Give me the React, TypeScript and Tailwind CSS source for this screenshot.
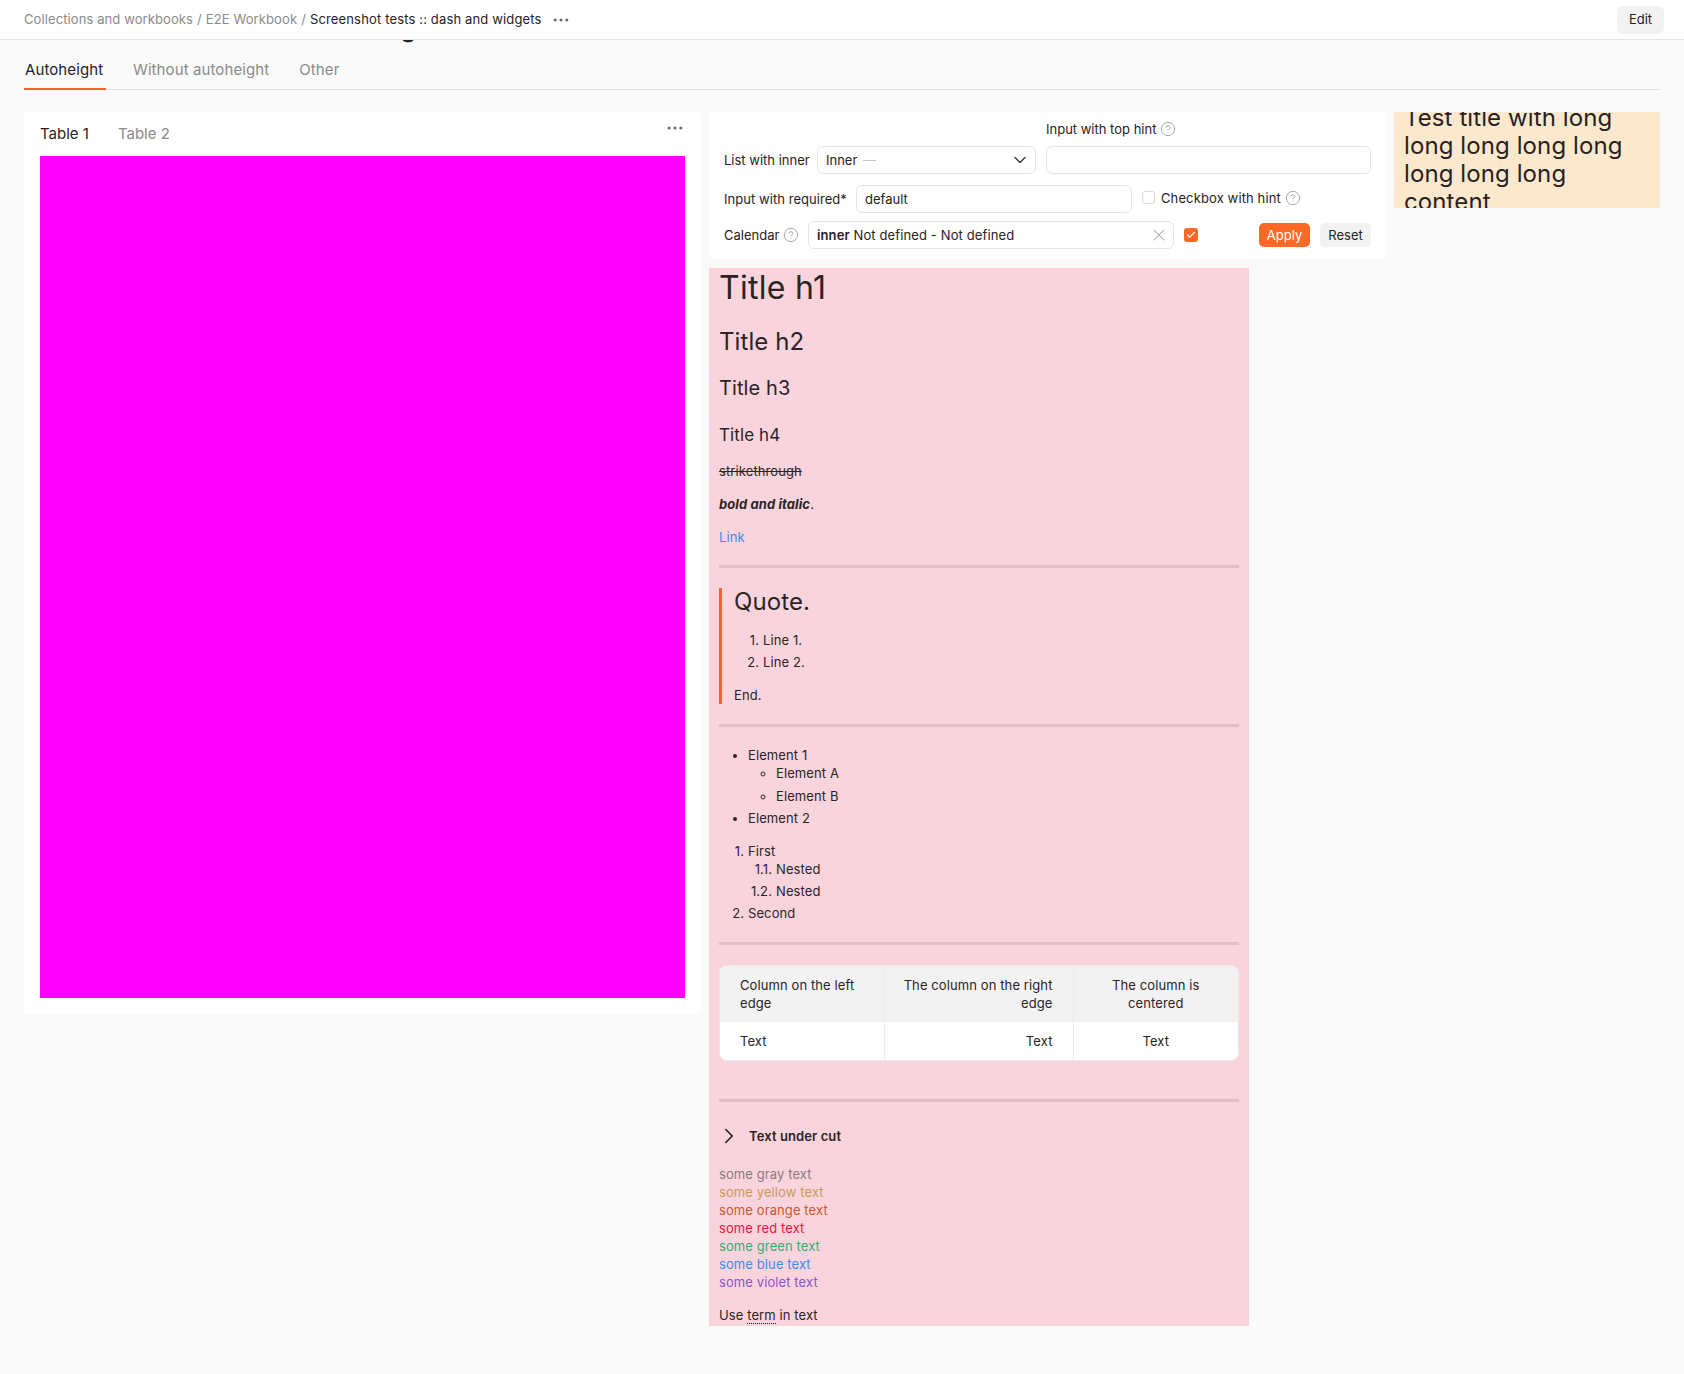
import React from 'react';
import { ChevronDown, ChevronRight, CircleHelp, Check, X, Ellipsis } from 'lucide-react';

const Hint = () => <CircleHelp className="w-[16px] h-[16px] text-[#a8a8a8] shrink-0" strokeWidth={1.5} />;

const Rule = ({ className }: { className: string }) => <div className={`h-[3px] bg-[#e4bcc5] ${className}`}></div>;

// numbered row with the marker pushed to the right of its column
const NumRow = ({ n, w, className, children }: { n: string; w: string; className?: string; children: React.ReactNode }) => (
    <div className={`flex ${className ?? ''}`}>
        <span className={`${w} text-right pr-[4px] shrink-0`}>{n}</span>
        <span>{children}</span>
    </div>
);

const colored = [
    ['some gray text', 'text-[#8b7a80]'],
    ['some yellow text', 'text-[#c79a5a]'],
    ['some orange text', 'text-[#c9592e]'],
    ['some red text', 'text-[#f0143f]'],
    ['some green text', 'text-[#35ab72]'],
    ['some blue text', 'text-[#3c8ce8]'],
    ['some violet text', 'text-[#8a55cc]'],
];

const FormPanel = () => (
    <div className="bg-white rounded-[4px] h-[147px] pl-[15px] pr-[14px] pt-[8px] text-[13px] leading-[18px]">
        <div className="flex items-end">
            <span className="w-[78px] shrink-0 h-[28px] leading-[28px] whitespace-nowrap">List with inner</span>
            <div className="ml-[15px] w-[219px] h-[28px] border border-[#e5e5e5] rounded-[6px] flex items-center justify-between pl-[8px] pr-[5px]">
                <span className="flex items-center gap-[6px]">
                    Inner <span className="w-[13px] h-[1px] bg-[#c4c4c4]"></span>
                </span>
                <ChevronDown className="w-[20px] h-[20px] text-[#333]" strokeWidth={1.5} />
            </div>
            <div className="ml-[10px] w-[325px]">
                <div className="flex items-center gap-[4px] h-[18px] mb-[8px]">
                    Input with top hint <Hint />
                </div>
                <div className="h-[28px] border border-[#e5e5e5] rounded-[6px]"></div>
            </div>
        </div>
        <div className="flex items-center mt-[11px]">
            <span className="w-[132px] shrink-0 whitespace-nowrap tracking-[0.05px]">Input with required*</span>
            <div className="w-[276px] h-[28px] border border-[#e5e5e5] rounded-[6px] flex items-center pl-[8px]">default</div>
            <span className="ml-[10px] w-[13px] h-[13px] border border-[#d9d9d9] rounded-[3px] -mt-[3px]"></span>
            <span className="ml-[6px] flex items-center gap-[4px] -mt-[3px] tracking-[0.12px]">
                Checkbox with hint <Hint />
            </span>
        </div>
        <div className="flex items-center mt-[8px]">
            <span className="w-[84px] shrink-0 flex items-center gap-[4px]">
                Calendar <Hint />
            </span>
            <div className="w-[366px] h-[28px] border border-[#e5e5e5] rounded-[6px] flex items-center justify-between pl-[8px] pr-[4px]">
                <span className="tracking-[0.12px]">
                    <b className="font-semibold">inner</b> Not defined - Not defined
                </span>
                <X className="w-[20px] h-[20px] text-[#a8a8a8]" strokeWidth={1.25} />
            </div>
            <span className="ml-[10px] w-[14px] h-[14px] rounded-[3px] bg-[#ff6928] flex items-center justify-center">
                <Check className="w-[10px] h-[10px] text-white" strokeWidth={3} />
            </span>
            <button className="ml-[61px] w-[51px] h-[24px] rounded-[5px] bg-[#ff6928] text-white text-center">Apply</button>
            <button className="ml-[10px] w-[51px] h-[24px] rounded-[5px] bg-[#f2f2f2] text-center">Reset</button>
        </div>
    </div>
);

const MarkdownPanel = () => (
    <div className="bg-[#fad4dc] w-[540px] h-[1058px] overflow-hidden mt-[9px] pl-[10px] pr-[10px] text-[13px] leading-[18px] tracking-[0.1px] text-[#2b2426]">
        <h1 className="text-[32px] leading-[40px] tracking-[0.3px]">Title h1</h1>
        <h2 className="text-[24px] leading-[32px] mt-[18px]">Title h2</h2>
        <h3 className="text-[20px] leading-[28px] mt-[16px]">Title h3</h3>
        <h4 className="text-[17px] leading-[24px] mt-[21px]">Title h4</h4>
        <p className="line-through mt-[15px]">strikethrough</p>
        <p className="mt-[15px]">
            <b className="italic font-bold">bold and italic</b>.
        </p>
        <p className="mt-[15px]">
            <a className="text-[#3c8ce8]">Link</a>
        </p>
        <Rule className="mt-[19px]" />

        <blockquote className="mt-[20px] h-[116px] border-l-[3px] border-[#f0652f] pl-[12px]">
            <p className="text-[24px] leading-[28px]">Quote.</p>
            <NumRow n="1." w="w-[29px]" className="mt-[15px]">Line 1.</NumRow>
            <NumRow n="2." w="w-[29px]" className="mt-[4px]">Line 2.</NumRow>
            <p className="mt-[15px]">End.</p>
        </blockquote>
        <Rule className="mt-[20px]" />

        <ul className="list-disc pl-[29px] mt-[19px]">
            <li>
                Element 1
                <ul className="list-[circle] pl-[28px]">
                    <li>Element A</li>
                    <li className="mt-[5px]">Element B</li>
                </ul>
            </li>
            <li className="mt-[4px]">Element 2</li>
        </ul>

        <NumRow n="1." w="w-[29px]" className="mt-[15px]">First</NumRow>
        <NumRow n="1.1." w="w-[57px]">Nested</NumRow>
        <NumRow n="1.2." w="w-[57px]" className="mt-[4px]">Nested</NumRow>
        <NumRow n="2." w="w-[29px]" className="mt-[4px]">Second</NumRow>
        <Rule className="mt-[20px]" />

        <div className="mt-[20px] w-[520px] bg-white rounded-[8px] border border-[#eaeaea] overflow-hidden">
            <table className="w-full table-fixed border-collapse">
                <colgroup>
                    <col className="w-[164px]" />
                    <col className="w-[189px]" />
                    <col />
                </colgroup>
                <thead>
                    <tr className="bg-[#f2f2f2]">
                        <th className="font-normal text-left px-[20px] py-[10px] border-r border-[#ececec]">Column on the left edge</th>
                        <th className="font-normal text-right pl-[10px] pr-[20px] py-[10px] border-r border-[#ececec]">The column on the right edge</th>
                        <th className="font-normal text-center px-[20px] py-[10px]">The column is centered</th>
                    </tr>
                </thead>
                <tbody>
                    <tr>
                        <td className="text-left px-[20px] py-[10px] border-r border-[#ececec]">Text</td>
                        <td className="text-right px-[20px] py-[10px] border-r border-[#ececec]">Text</td>
                        <td className="text-center px-[20px] py-[10px]">Text</td>
                    </tr>
                </tbody>
            </table>
        </div>
        <Rule className="mt-[38px]" />

        <div className="flex items-center mt-[25px] font-semibold">
            <ChevronRight className="w-[26px] h-[26px] -my-[4px] -ml-[3px] text-[#222] shrink-0" strokeWidth={1.5} />
            <span className="ml-[7px]">Text under cut</span>
        </div>

        <div className="mt-[20px]">
            {colored.map(([label, cls]) => (
                <p key={label} className={cls}>{label}</p>
            ))}
        </div>
        <p className="mt-[15px]">
            Use <span className="border-b border-dotted border-[#222]">term</span> in text
        </p>
    </div>
);

export default function App() {
    return (
        <div className="h-[1374px] overflow-hidden bg-[#fafafa] text-[#262224] [font-family:Inter,sans-serif]">
            {/* Top bar sits above the page title */}
            <header className="relative z-10 h-[40px] bg-white border-b border-[#e5e5e5] flex items-center justify-between pl-[24px] pr-[20px] text-[13px]">
                <div className="flex items-center whitespace-nowrap tracking-[0.1px]">
                    <span className="text-[#8a8a8a]">Collections and workbooks</span>
                    <span className="text-[#8a8a8a] mx-[4px]">/</span>
                    <span className="text-[#8a8a8a]">E2E Workbook</span>
                    <span className="text-[#8a8a8a] mx-[4px]">/</span>
                    <span className="tracking-[0.15px]">Screenshot tests :: dash and widgets</span>
                    <Ellipsis className="w-[20px] h-[20px] ml-[9px] text-[#666]" strokeWidth={1.6} />
                </div>
                <button className="w-[47px] h-[28px] rounded-[6px] bg-[#f2f2f2] text-center">Edit</button>
            </header>

            <main className="px-[24px]">
                <h1 className="text-[24px] leading-[32px] font-semibold -mt-[27px] whitespace-nowrap">Screenshot tests :: dash and widgets</h1>

                <nav className="mt-[8px] h-[37px] border-b border-[#e0e0e0] flex text-[15px] leading-[20px] tracking-[0.1px]">
                    <span className="h-[37px] w-[82px] pl-[1px] pt-[7px] border-b-2 border-[#f0652f]">Autoheight</span>
                    <span className="ml-[27px] pt-[7px] text-[#8a8a8a]">Without autoheight</span>
                    <span className="ml-[30px] pt-[7px] text-[#8a8a8a]">Other</span>
                </nav>

                <div className="flex items-start gap-[8px] pt-[22px]">
                    <section className="w-[677px] h-[902px] bg-white rounded-[4px] px-[16px]">
                        <div className="flex items-start justify-between h-[44px]">
                            <div className="flex text-[15px] leading-[20px] pt-[12px]">
                                <span>Table 1</span>
                                <span className="ml-[29px] text-[#8a8a8a]">Table 2</span>
                            </div>
                            <Ellipsis className="w-[20px] h-[20px] mt-[6px] text-[#666]" strokeWidth={1.6} />
                        </div>
                        <div className="h-[842px] w-[645px] bg-[#ff00ff]"></div>
                    </section>

                    <div className="w-[677px]">
                        <FormPanel />
                        <MarkdownPanel />
                    </div>

                    <section className="w-[266px] h-[96px] bg-[#fce8cd] overflow-hidden pl-[10px] pr-[11px]">
                        <p className="text-[24px] leading-[28px] tracking-[0.1px] -mt-[8px]">Test title with long long long long long long long long content</p>
                    </section>
                </div>
            </main>
        </div>
    );
}
